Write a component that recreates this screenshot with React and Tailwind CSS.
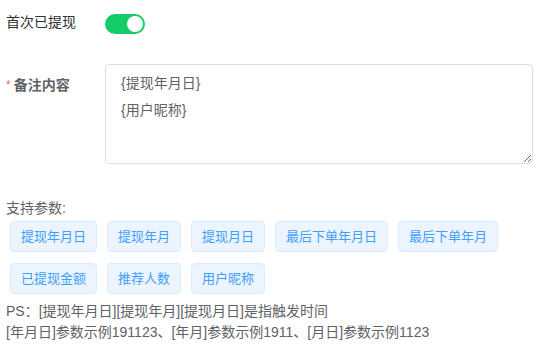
export default function App() {
  const row1 = ["提现年月日", "提现年月", "提现月日", "最后下单年月日", "最后下单年月"];
  const row2 = ["已提现金额", "推荐人数", "用户昵称"];
  const Tag = ({ t }) => (
    <span className="inline-flex items-center h-[31px] px-[10px] rounded-[4px] border border-[#d9ecff] bg-[#ecf5ff] text-[#409eff] text-[13px]">
      {t}
    </span>
  );
  return (
    <div
      className="w-[537px] h-[347px] bg-white pl-[6px] overflow-hidden"
      style={{ fontFamily: '"Liberation Sans", "Noto Sans CJK SC", sans-serif' }}
    >
      <div className="flex items-start pt-[12px]">
        <div className="w-[99px] text-[14px] leading-[20px] text-[#303133]">首次已提现</div>
        <div className="mt-[2px] w-[40px] h-[20px] rounded-full bg-[#13ce66] flex items-center justify-end pr-[2px]">
          <div className="w-[16px] h-[16px] rounded-full bg-white" />
        </div>
      </div>
      <div className="flex items-start mt-[30px]">
        <div className="w-[99px] pt-[11px] text-[14px] leading-[20px] font-bold text-[#606266] flex items-center">
          <span className="text-[#f56c6c] text-[12px] font-normal mr-[3px]">*</span>
          备注内容
        </div>
        <textarea
          readOnly
          defaultValue={"{提现年月日}\n{用户昵称}"}
          className="w-[428px] h-[100px] border border-[#dcdfe6] rounded-[4px] px-[15px] py-[5px] text-[14px] leading-[27px] text-[#606266] outline-none resize-y"
        />
      </div>
      <div className="mt-[34px] text-[14px] leading-[20px] text-[#606266]">支持参数:</div>
      <div className="pl-[4px] mt-[3px] flex flex-col gap-[11px]">
        <div className="flex gap-[10px]">
          {row1.map((t) => (
            <Tag key={t} t={t} />
          ))}
        </div>
        <div className="flex gap-[10px]">
          {row2.map((t) => (
            <Tag key={t} t={t} />
          ))}
        </div>
      </div>
      <div className="mt-[7px] text-[14px] leading-[21px] text-[#606266]">
        <div>PS：[提现年月日][提现年月][提现月日]是指触发时间</div>
        <div>[年月日]参数示例191123、[年月]参数示例1911、[月日]参数示例1123</div>
      </div>
    </div>
  );
}
